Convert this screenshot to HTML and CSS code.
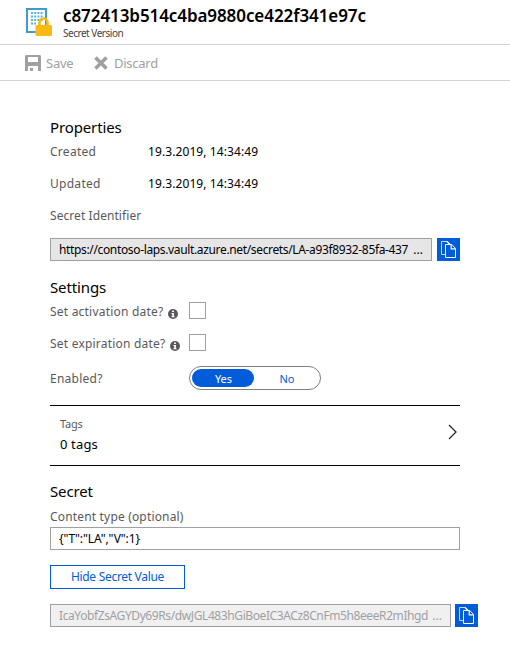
FILE: index.html
```
<!DOCTYPE html>
<html lang="en">
<head>
<meta charset="utf-8">
<title>Secret Version</title>
<link rel="stylesheet" href="styles.css">
</head>
<body>
<svg width="0" height="0" class="defs">
  <symbol id="copy" viewBox="0 0 23 23">
    <path d="M8.500 16.500h-4v-13h6l2 2" fill="none" stroke="#c5daf8" stroke-width="1"/>
    <path d="M8.500 6.500h6.300l3.700 4v9h-10z" fill="#015cda" stroke="#fff" stroke-width="1"/>
    <path d="M14.200 6.800v4h4" fill="none" stroke="#fff" stroke-width="1.200"/>
    <path d="M10 3.500l3 3" fill="none" stroke="#fff" stroke-width="1.200"/>
  </symbol>
  <symbol id="info" viewBox="0 0 10 10">
    <circle cx="5" cy="5" r="5" fill="#595959"/>
    <path d="M4.1 1.6h1.8v1.5H4.1zM3.5 4h2.4v3.2h.7v1H3.5v-1h.7V5h-.7z" fill="#fff"/>
  </symbol>
</svg>
<header class="head">
  <svg class="logo" width="28" height="30" viewBox="0 0 28 30">
    <path d="M1 1h19v23H1z" fill="#fff" stroke="#3f9bc9" stroke-width="2"/>
    <path d="M5 5h12M5 8.500h12M5 12h12M5 15.500h5" stroke="#59b4d9" stroke-width="1.800" stroke-dasharray="2 1.200"/>
    <path d="M13.500 18v-3.500a4 4 0 0 1 8 0V18" fill="none" stroke="#fdb913" stroke-width="2.600"/>
    <rect x="9.500" y="17" width="16.500" height="11" rx="1.500" fill="#fdb913"/>
  </svg>
  <div>
    <h1 class="title">c872413b514c4ba9880ce422f341e97c</h1>
    <div class="subtitle">Secret Version</div>
  </div>
</header>
<nav class="toolbar">
  <svg width="16" height="16" viewBox="0 0 16 16"><path fill-rule="evenodd" d="M0 1l1-1h14l1 1v15h-3v-5H3v5H0zM3 2v5h10V2zM5 13h3v3H5z" fill="#a0a0a0"/></svg>
  <span class="save">Save</span>
  <svg class="cross" width="14" height="14" viewBox="0 0 14 14"><path d="M1.500 1.500l11 11M12.500 1.500l-11 11" stroke="#a0a0a0" stroke-width="3.600"/></svg>
  <span class="discard">Discard</span>
</nav>
<main class="content">
  <h2 class="heading">Properties</h2>
  <div class="row"><span class="name">Created</span><span class="date">19.3.2019, 14:34:49</span></div>
  <div class="row"><span class="name">Updated</span><span class="date">19.3.2019, 14:34:49</span></div>
  <div class="row"><span class="ident">Secret Identifier</span></div>
  <div class="field-row">
    <div class="field grey"><span class="url">https://contoso-laps.vault.azure.net/secrets/LA-a93f8932-85fa-437</span><span>...</span></div>
    <button class="copy" aria-label="Copy"><svg width="23" height="23"><use href="#copy"/></svg></button>
  </div>
  <h2 class="heading settings">Settings</h2>
  <div class="row option"><span class="label">Set activation date?</span><svg class="info" width="10" height="10"><use href="#info"/></svg><i class="box"></i></div>
  <div class="row option"><span class="label">Set expiration date?</span><svg class="info" width="10" height="10"><use href="#info"/></svg><i class="box"></i></div>
  <div class="enabled"><span class="en">Enabled?</span><div class="toggle"><span class="on">Yes</span><span class="off">No</span></div></div>
  <section class="tags">
    <div><div class="tags-title">Tags</div><div class="tags-count">0 tags</div></div>
    <svg class="chevron" width="9" height="16" viewBox="0 0 9 16"><path d="M1 1l7 7-7 7" fill="none" stroke="#222" stroke-width="1.200"/></svg>
  </section>
  <h2 class="heading secret">Secret</h2>
  <div class="ctype"><span>Content type (optional)</span></div>
  <div class="field"><span class="json">{"T":"LA","V":1}</span></div>
  <button class="hide">Hide Secret Value</button>
  <div class="field-row wide">
    <div class="field disabled"><span class="value">IcaYobfZsAGYDy69Rs/dwJGL483hGiBoeIC3ACz8CnFm5h8eeeR2mIhgd</span><span>...</span></div>
    <button class="copy" aria-label="Copy"><svg width="23" height="23"><use href="#copy"/></svg></button>
  </div>
</main>
</body>
</html>
```
FILE: styles.css
```
* { box-sizing: border-box; }
body { margin: 0; background: #fff; color: #000; font: 12px/16px "Noto Sans", "Open Sans", sans-serif; white-space: nowrap; }
h1, h2 { margin: 0; }
button { font: inherit; padding: 0; }
svg { display: block; flex: none; }
.defs { position: absolute; }
.head { display: flex; height: 45px; padding: 5px 0 0 26px; border-bottom: 1px solid #d4d4d4; }
.logo { margin: 3px 9px 0 0; }
.title { font-size: 17px; line-height: 22px; font-weight: 600; letter-spacing: -0.08px; }
.subtitle { font-size: 10px; line-height: 13px; letter-spacing: -0.48px; color: #444; }
.toolbar { display: flex; align-items: center; height: 36px; padding-left: 25px; border-bottom: 1px solid #d4d4d4; font-size: 13px; letter-spacing: -0.25px; color: #a0a0a0; }
.save { width: 48px; margin-left: 5px; }
.discard { margin-left: 6px; }
.content { width: 410px; margin-left: 50px; padding-top: 38px; color: #595959; }
.heading { height: 17px; font-size: 15px; line-height: 16px; font-weight: 400; letter-spacing: -0.13px; color: #000; }
.row { display: flex; height: 32px; align-items: center; }
.name { width: 98px; letter-spacing: 0.28px; }
.date { letter-spacing: 0.09px; color: #000; }
.ident { letter-spacing: 0.07px; }
.field-row { display: flex; justify-content: space-between; margin-top: 6px; }
.field { display: flex; justify-content: space-between; align-items: center; height: 23px; padding: 0 8px; border: 1px solid #a0a0a0; color: #000; }
.field-row .field { width: 382px; }
.grey { background: #e6e6e6; }
.url { letter-spacing: -0.35px; }
.value { letter-spacing: -0.4px; }
.json { letter-spacing: -0.1px; }
.copy { width: 23px; height: 23px; border: 0; background: #015cda; }
.settings { margin-top: 18px; }
.label { letter-spacing: 0.21px; }
.info { margin: 3px 0 0 5px; }
.box { width: 17px; height: 17px; margin: 0 254px 3px auto; border: 1px solid #a0a0a0; }
.enabled { display: flex; align-items: center; height: 24px; margin-top: 6px; }
.en { width: 139px; padding-top: 1px; letter-spacing: 0.25px; }
.toggle { display: flex; width: 132px; height: 24px; padding: 2px; border: 1px solid #808080; border-radius: 12px; line-height: 19px; text-align: center; font-size: 11px; }
.on { flex: none; width: 62px; height: 18px; padding-left: 1px; border-radius: 9px; color: #fff; background: #015cda; }
.off { flex: none; width: 66px; color: #015cda; }
.tags { display: flex; justify-content: space-between; align-items: center; height: 61px; margin-top: 15px; padding: 0 3px 0 10px; border: solid #000; border-width: 1px 0; }
.tags-title { font-size: 11px; line-height: 16px; letter-spacing: -0.2px; }
.tags-count { font-size: 13px; line-height: 24px; letter-spacing: 0.15px; color: #000; }
.chevron { margin-bottom: 7px; }
.secret { margin-top: 17px; }
.ctype { height: 16px; margin: 9px 0 2px; letter-spacing: 0.17px; }
.hide { display: block; width: 135px; height: 24px; margin-top: 15px; border: 1px solid #015cda; background: #fff; color: #015cda; letter-spacing: -0.3px; }
.wide { width: 428px; margin-top: 15px; }
.wide .field { width: 401px; }
.wide .disabled { background: #f0f0f0; color: #a0a0a0; }
```
